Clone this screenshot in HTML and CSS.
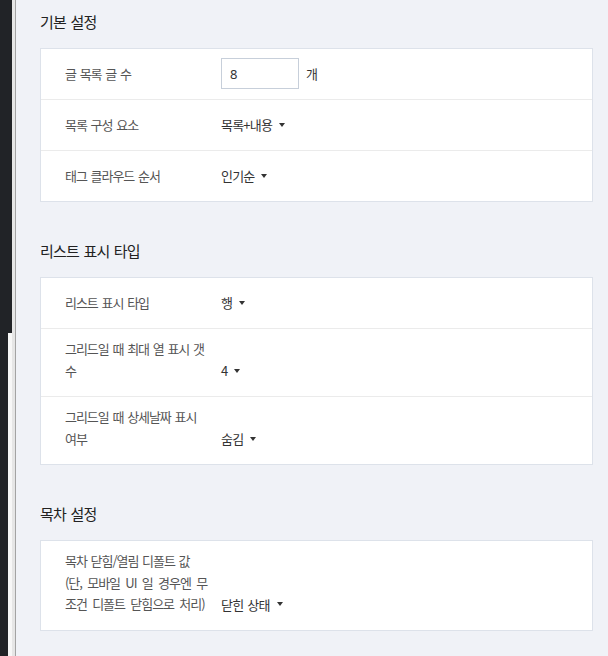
FILE: index.html
```html
<!DOCTYPE html>
<html lang="ko">
<head>
<meta charset="utf-8">
<title>설정</title>
<link rel="stylesheet" href="styles.css">
</head>
<body>
<div class="edge">
  <div class="edge-dark"></div>
  <div class="edge-mid"></div>
  <div class="edge-light"></div>
  <div class="edge-line"></div>
</div>
<main class="main">
  <section class="section">
    <h2 class="section-title">기본 설정</h2>
    <div class="card">
      <div class="row">
        <div class="label">글 목록 글 수</div>
        <div class="value">
          <input class="num-input" type="text" value="8">
          <span class="unit">개</span>
        </div>
      </div>
      <div class="row">
        <div class="label">목록 구성 요소</div>
        <div class="value"><span class="dropdown">목록+내용<span class="caret"></span></span></div>
      </div>
      <div class="row">
        <div class="label">태그 클라우드 순서</div>
        <div class="value"><span class="dropdown">인기순<span class="caret"></span></span></div>
      </div>
    </div>
  </section>

  <section class="section">
    <h2 class="section-title">리스트 표시 타입</h2>
    <div class="card">
      <div class="row">
        <div class="label">리스트 표시 타입</div>
        <div class="value"><span class="dropdown">행<span class="caret"></span></span></div>
      </div>
      <div class="row">
        <div class="label">그리드일 때 최대 열 표시 갯수</div>
        <div class="value"><span class="dropdown">4<span class="caret"></span></span></div>
      </div>
      <div class="row">
        <div class="label">그리드일 때 상세날짜 표시 여부</div>
        <div class="value"><span class="dropdown">숨김<span class="caret"></span></span></div>
      </div>
    </div>
  </section>

  <section class="section">
    <h2 class="section-title">목차 설정</h2>
    <div class="card">
      <div class="row">
        <div class="label">목차 닫힘/열림 디폴트 값<span class="label-note">(단, 모바일 UI 일 경우엔 무조건 디폴트 닫힘으로 처리)</span></div>
        <div class="value"><span class="dropdown">닫힌 상태<span class="caret"></span></span></div>
      </div>
    </div>
  </section>
</main>
</body>
</html>
```

FILE: styles.css
```css
html, body {
  margin: 0;
  padding: 0;
}

body {
  display: flex;
  min-height: 656px;
  background: #f0f2f7;
  font-family: "Noto Sans CJK KR", "Noto Sans", sans-serif;
  color: #333;
}

.edge {
  display: flex;
  flex: none;
}

.edge-dark {
  width: 8px;
  background: #212327;
}

.edge-mid {
  width: 4px;
  background: linear-gradient(to bottom, #212327 0, #212327 333px, #f7f7f7 333px);
}

.edge-light {
  width: 3px;
  background: #e6e6e6;
}

.edge-line {
  width: 1px;
  background: #a3a3a3;
}

.main {
  flex: 1;
  padding: 12px 15px 0 24px;
}

.section {
  margin-bottom: 39px;
}

.section-title {
  margin: 0 0 16px;
  font-size: 15px;
  line-height: 20px;
  font-weight: 400;
  letter-spacing: -0.8px;
  word-spacing: 1px;
  color: #222;
}

.card {
  background: #fff;
  border: 1px solid #dde2ea;
}

.row {
  display: flex;
  align-items: flex-end;
  padding: 9px 24px 10px;
  border-top: 1px solid #ebebeb;
}

.row:first-child {
  border-top: none;
}

.label {
  flex: none;
  width: 146px;
  margin-right: 10px;
  padding-bottom: 5px;
  font-size: 13px;
  line-height: 21.5px;
  letter-spacing: -1.05px;
  word-spacing: 1.2px;
  color: #555;
  word-break: break-all;
}

.label-note {
  display: block;
  word-spacing: 2.8px;
}

.value {
  display: flex;
  align-items: center;
  height: 31px;
  font-size: 13px;
  letter-spacing: -0.8px;
  word-spacing: 1.2px;
  color: #333;
}

.num-input {
  box-sizing: border-box;
  width: 78px;
  height: 31px;
  margin: 0;
  padding: 0 8px;
  border: 1px solid #c7cfda;
  border-radius: 0;
  font-family: "Noto Sans", "Noto Sans CJK KR", sans-serif;
  font-size: 13px;
  letter-spacing: 0;
  color: #333;
  background: #fff;
  outline: none;
}

.unit {
  margin-left: 7px;
}

.dropdown {
  display: inline-flex;
  align-items: center;
  line-height: 31px;
}

.caret {
  display: inline-block;
  width: 0;
  height: 0;
  margin-left: 7px;
  border-top: 4px solid #333;
  border-left: 3.5px solid transparent;
  border-right: 3.5px solid transparent;
}
```
